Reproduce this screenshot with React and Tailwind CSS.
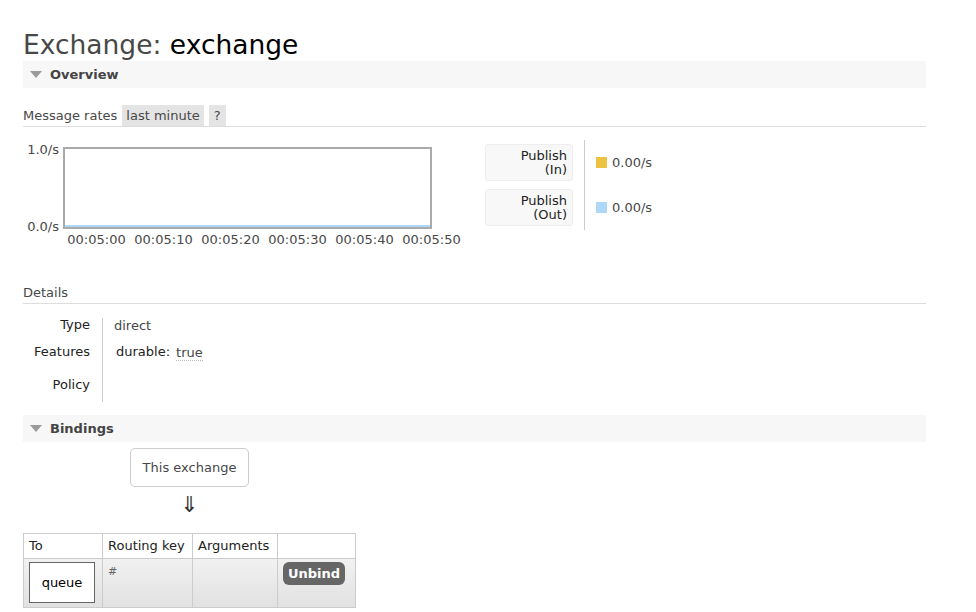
import React from "react";

const SectionBar = ({ title }) => (
  <div className="flex h-[27px] items-center bg-[#f7f7f7] pl-[7px]">
    <svg width="12" height="7" viewBox="0 0 12 7" className="mr-[8px]">
      <polygon points="0,0 12,0 6,7" fill="#9a9a9a" />
    </svg>
    <span className="font-bold text-[#444]">{title}</span>
  </div>
);

const ticks = ["00:05:00", "00:05:10", "00:05:20", "00:05:30", "00:05:40", "00:05:50"];

const legend = [
  { label: ["Publish", "(In)"], color: "bg-[#edc240]" },
  { label: ["Publish", "(Out)"], color: "bg-[#afd8f8]" },
];

const App = () => {
  return (
    <div className="min-h-screen bg-white pl-[23px] pr-[50px] pt-[30px] font-['DejaVu_Sans',sans-serif] text-[13px] leading-[14px] text-[#484848]">
      <h1 className="mb-[1px] text-[26.5px] font-normal leading-[30px]">
        Exchange: <span className="text-black">exchange</span>
      </h1>

      <SectionBar title="Overview" />

      {/* message rates */}
      <div className="mt-[17px] flex h-[22px] border-b border-[#dddddd]">
        <span className="leading-[21px]">Message rates</span>
        <span className="ml-[5px] h-[21px] bg-[#e4e4e4] px-[4px] leading-[21px]">last minute</span>
        <span className="ml-[5px] h-[21px] bg-[#e4e4e4] px-[5px] leading-[21px]">?</span>
      </div>

      <div className="mt-[13px] flex items-start">
        <div className="mt-[7px] flex w-[442px] flex-col">
          <div className="flex h-[82px]">
            <div className="-mt-[4px] flex h-[91px] w-[40px] shrink-0 flex-col justify-between pr-[4px] text-right">
              <span>1.0/s</span>
              <span>0.0/s</span>
            </div>
            <div className="flex h-[82px] w-[369px] flex-col justify-end border-2 border-[#aaaaaa]">
              <div className="h-[2px] bg-[#afd8f8]" />
            </div>
          </div>
          <div className="ml-[40px] mt-[4px] flex">
            {ticks.map((t) => (
              <span key={t} className="w-[67px] shrink-0 whitespace-nowrap text-center">
                {t}
              </span>
            ))}
          </div>
        </div>

        <div className="ml-[20px] flex flex-col">
          {legend.map((row) => (
            <div key={row.label[1]} className="flex h-[45px]">
              <div className="flex w-[99px] items-center pr-[11px]">
                <div className="flex h-[37px] w-[88px] flex-col justify-center rounded-[3px] border border-[#eeeeee] bg-[#f8f8f8] pr-[5px] text-right leading-[14px] text-[#222]">
                  <span>{row.label[0]}</span>
                  <span>{row.label[1]}</span>
                </div>
              </div>
              <div className="flex items-center border-l border-[#cccccc] pl-[11px]">
                <span className={`h-[11px] w-[11px] ${row.color}`} />
                <span className="ml-[5px]">0.00/s</span>
              </div>
            </div>
          ))}
        </div>
      </div>

      {/* details */}
      <div className="mt-[36px] h-[21px] border-b border-[#dddddd] pt-[3px]">Details</div>

      <div className="mt-[14px] grid grid-cols-[79px_1fr]">
        <div className="h-[20px] pr-[12px] text-right text-[#222]">Type</div>
        <div className="h-[20px] border-l border-[#cccccc] pl-[11px] pt-[1px]">direct</div>

        <div className="h-[30px] pr-[12px] pt-[7px] text-right text-[#222]">Features</div>
        <div className="flex h-[30px] items-start border-l border-[#cccccc] pl-[13px] pt-[7px]">
          <span className="text-[#222]">durable:</span>
          <span className="ml-[6px] mt-[1px] border-b border-dotted border-[#bbbbbb] leading-[14px]">true</span>
        </div>

        <div className="h-[34px] pr-[12px] pt-[10px] text-right text-[#222]">Policy</div>
        <div className="h-[34px] border-l border-[#cccccc]" />
      </div>

      <div className="mt-[13px]">
        <SectionBar title="Bindings" />
      </div>

      {/* bindings */}
      <div className="ml-[107px] mt-[6px] flex h-[39px] w-[119px] items-center justify-center rounded-[5px] border border-[#cccccc]">
        This exchange
      </div>
      <div className="ml-[107px] mt-[6px] w-[119px] text-center text-[22px] leading-[24px] text-[#333]">⇓</div>

      <table className="mt-[16px] table-fixed border-collapse">
        <thead>
          <tr className="h-[25px]">
            <th className="w-[79px] border border-[#cccccc] pl-[5px] text-left font-normal text-[#222]">To</th>
            <th className="w-[90px] border border-[#cccccc] pl-[5px] text-left font-normal text-[#222]">Routing key</th>
            <th className="w-[85px] border border-[#cccccc] pl-[5px] text-left font-normal text-[#222]">Arguments</th>
            <th className="w-[78px] border border-[#cccccc]" />
          </tr>
        </thead>
        <tbody>
          <tr className="h-[49px] bg-linear-to-b from-[#f1f1f1] to-[#e1e1e1] align-top">
            <td className="border border-[#cccccc] pl-[5px] pt-[3px]">
              <div className="flex h-[41px] w-[66px] items-center justify-center border border-[#666666] bg-white text-black">
                queue
              </div>
            </td>
            <td className="border border-[#cccccc] pl-[5px] pt-[6px] text-[11px] text-[#666]">#</td>
            <td className="border border-[#cccccc]" />
            <td className="border border-[#cccccc] pl-[5px] pt-[3px]">
              <span className="inline-flex h-[23px] w-[62px] items-center justify-center rounded-[6px] bg-[#666666] font-bold text-white">
                Unbind
              </span>
            </td>
          </tr>
        </tbody>
      </table>
    </div>
  );
};

export default App;
